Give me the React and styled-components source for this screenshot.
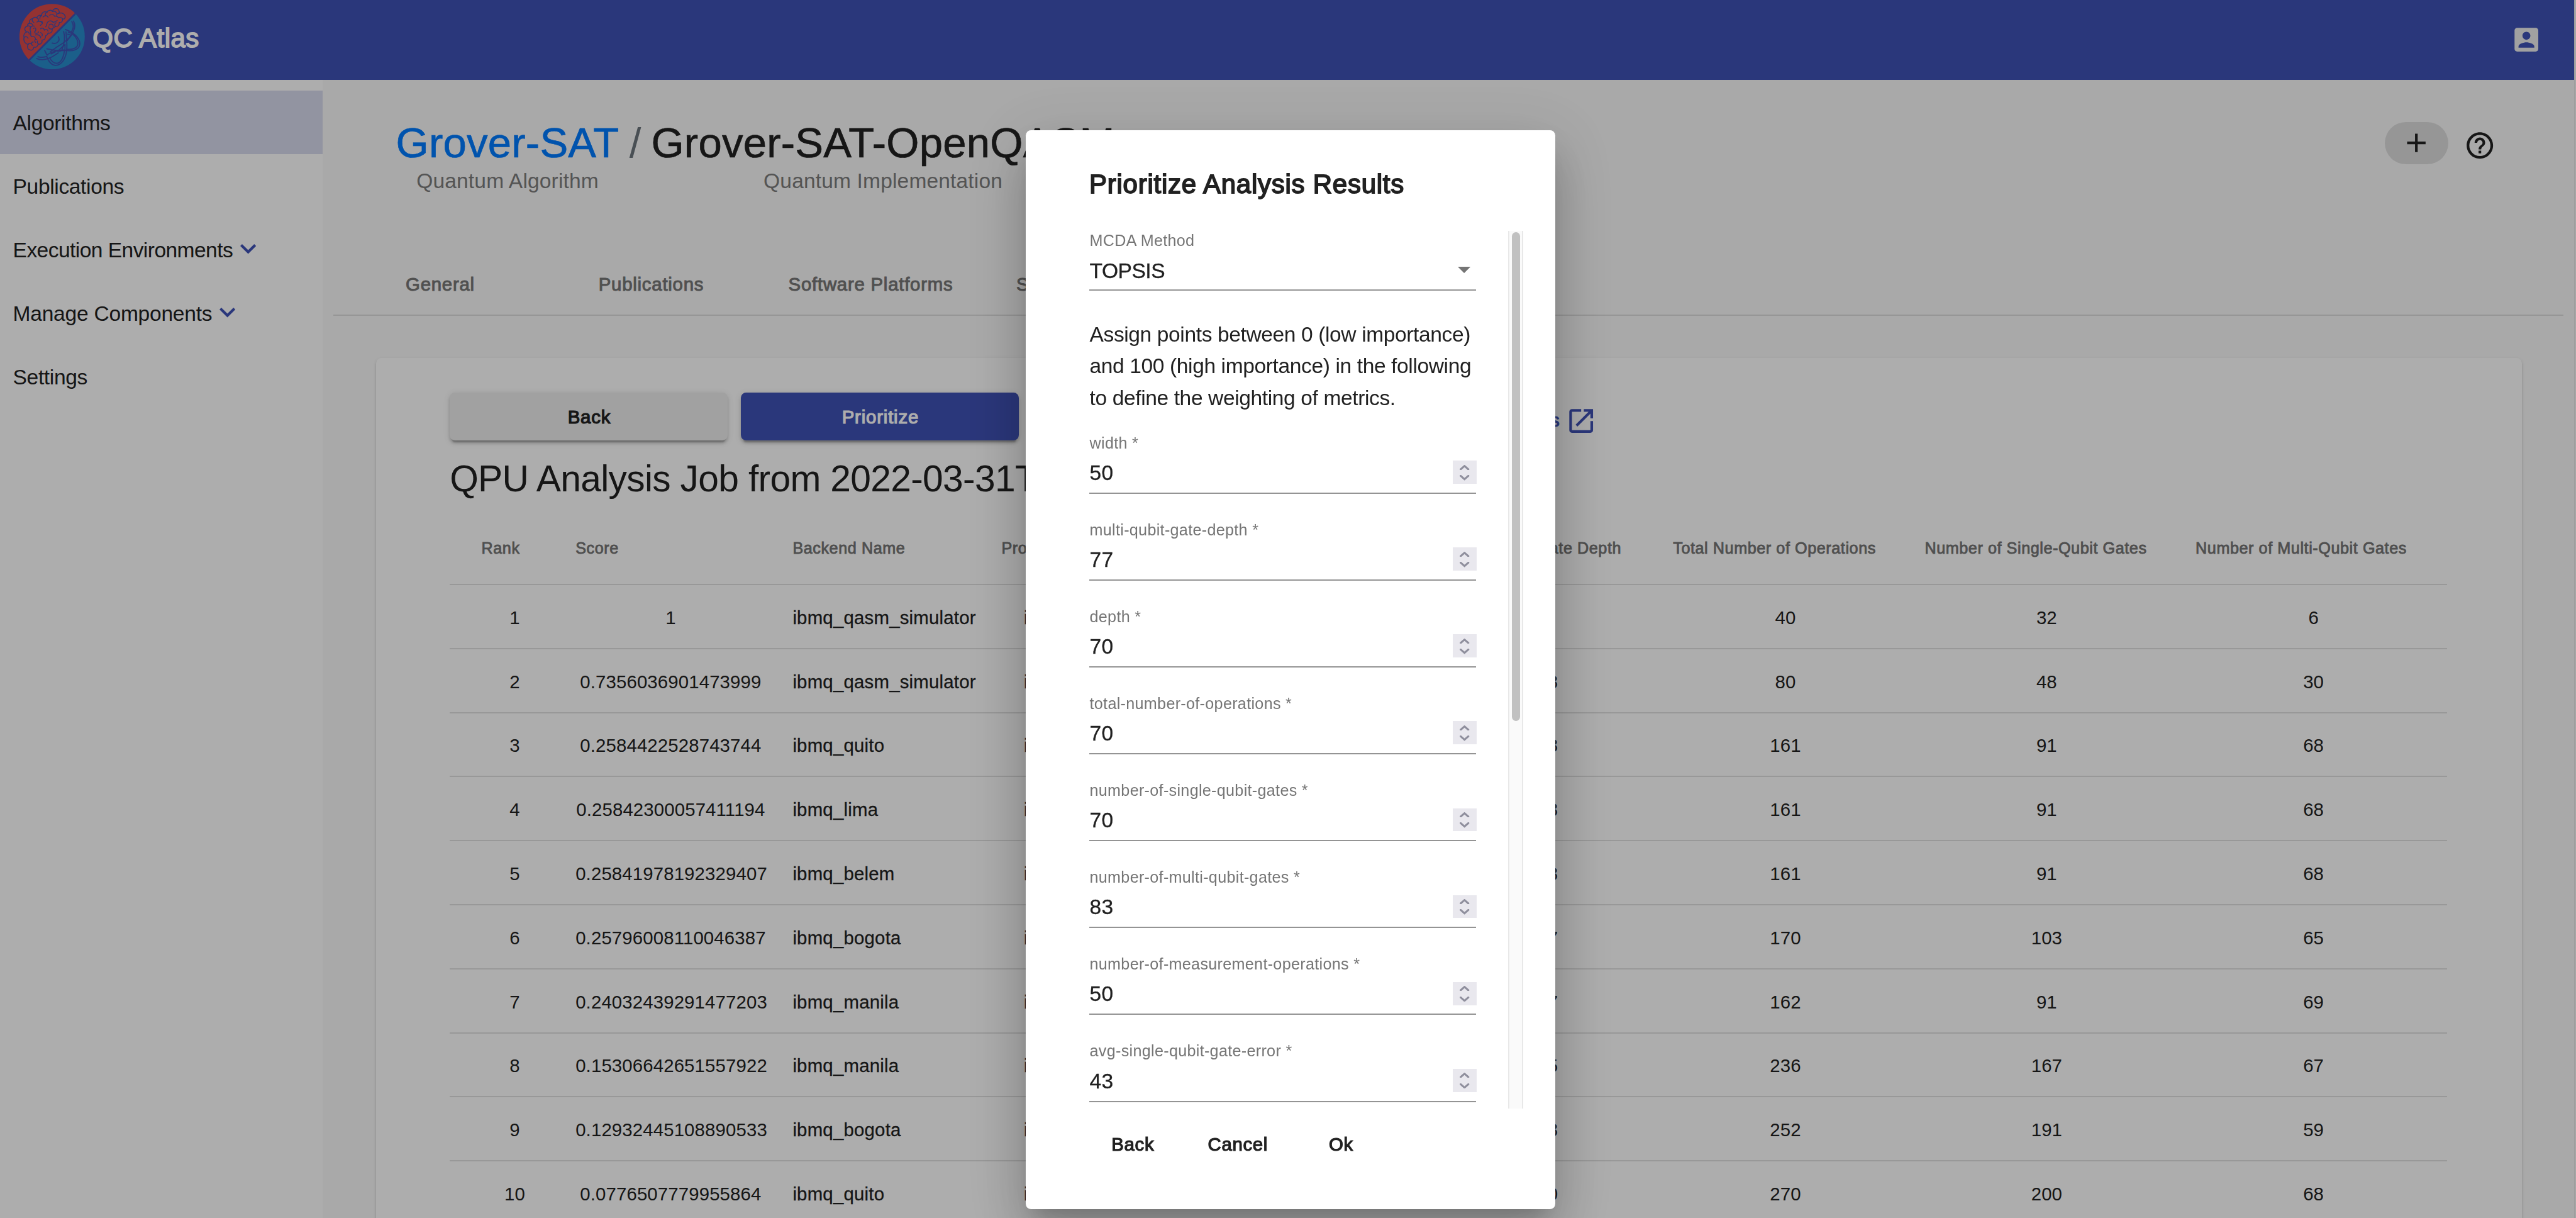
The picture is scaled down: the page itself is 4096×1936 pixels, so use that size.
import React from "react";
import styled, { createGlobalStyle, css } from "styled-components";

const GlobalStyle = createGlobalStyle`
  html { font-size: 80.6617px; }
  body {
    margin: 0;
    overflow: hidden;
    font-family: "Liberation Sans", Arial, Helvetica, sans-serif;
    color: #212121;
    background: #fafafa;
  }
  *, *::before, *::after { box-sizing: border-box; }
`;

const light = css`
  font-weight: 400;
  letter-spacing: -0.0115em;
`;

const medium = css`
  font-weight: 400;
  letter-spacing: 0.023em;
  -webkit-text-stroke: 0.042em currentColor;
`;

const Page = styled.div`
  display: flex;
  width: 100vw;
  height: 100vh;
  overflow: hidden;
`;

const Shell = styled.div`
  flex: 1;
  min-width: 0;
  display: flex;
  flex-direction: column;
`;

const PageScrollbar = styled.div`
  width: 0.04rem;
  background: #f9f9f9;
  border-left: 2px solid #e9e9e9;
`;

/* ---------- top bar ---------- */

const TopBar = styled.header`
  flex: none;
  height: 1.57rem;
  padding: 0 0.628rem 0 0.39rem;
  display: flex;
  align-items: center;
  background: #3f51b5;
  color: #fff;
`;

const LogoSvg = styled.svg`
  width: 1.287rem;
  height: 1.294rem;
  margin-bottom: 0.116rem;
`;

const Brand = styled.span`
  ${medium}
  margin: 0 auto 0.055rem 0.149rem;
  font-size: 0.52rem;
  line-height: 1;
  letter-spacing: 0.012em;
`;

const Icon = styled.svg`
  display: block;
  flex: none;
  width: 0.624rem;
  height: 0.624rem;
  fill: ${(p) => p.$color || "currentColor"};
`;

const Body = styled.div`
  flex: 1;
  min-height: 0;
  display: flex;
`;

/* ---------- side navigation ---------- */

const SideNav = styled.nav`
  flex: none;
  width: 6.36rem;
  padding-top: 0.21rem;
  background: #fff;
`;

const NavItem = styled.a`
  ${light}
  display: flex;
  align-items: center;
  height: 1.252rem;
  padding: 0.035rem 0 0 0.255rem;
  font-size: 0.416rem;
  line-height: 1;
  letter-spacing: ${(p) => p.$tracking || "-0.0105em"};
  background: ${(p) => (p.$active ? "#d8daee" : "transparent")};
`;

const Chevron = styled.svg`
  width: 0.312rem;
  height: 0.193rem;
  margin: 0 0 0.03rem 0.15rem;
  fill: #3f51b5;
`;

/* ---------- main area ---------- */

const Main = styled.main`
  flex: 1;
  min-width: 0;
  display: flex;
  flex-direction: column;
  background: #fafafa;
  overflow: hidden;
`;

const Head = styled.div`
  flex: none;
  display: flex;
  align-items: flex-start;
  height: 3.41rem;
  padding: 0.82rem 1.538rem 0 1.445rem;
`;

const Crumb = styled.div`
  display: flex;
  flex-direction: column;
  align-items: center;
`;

const CrumbTitle = styled.span`
  font-size: 0.832rem;
  line-height: 1;
  letter-spacing: 0.003em;
  -webkit-text-stroke: 0.01em currentColor;
  white-space: nowrap;
  color: ${(p) => (p.$link ? "#007bff" : "#212121")};
`;

const CrumbKind = styled.span`
  margin-top: 0.133rem;
  font-size: 0.416rem;
  line-height: 1;
  letter-spacing: 0.0045em;
  color: #7d7d7d;
`;

const Slash = styled.span`
  margin: 0 0.2rem;
  font-size: 0.832rem;
  line-height: 1;
  color: #6c757d;
`;

const HeadActions = styled.div`
  margin-left: auto;
  display: flex;
  align-items: center;
  gap: 0.318rem;
`;

const AddPill = styled.button`
  display: flex;
  align-items: center;
  justify-content: center;
  width: 1.25rem;
  height: 0.83rem;
  margin-top: 0.01rem;
  padding: 0;
  border: 0;
  border-radius: 0.416rem;
  background: #dedede;
  color: #212121;
`;

const HelpButton = styled.span`
  margin-top: 0.115rem;
`;

const Tabs = styled.div`
  flex: none;
  display: flex;
  height: 1.25rem;
  margin: 0 0.21rem;
  padding-left: 0.028rem;
  border-bottom: 2px solid #dedede;
`;

const Tab = styled.div`
  ${medium}
  display: flex;
  align-items: center;
  justify-content: center;
  min-width: 4.16rem;
  padding: 0.015rem 0.624rem 0;
  font-size: 0.364rem;
  line-height: 1;
  letter-spacing: 0.026em;
  -webkit-text-stroke-width: 0.034em;
  white-space: nowrap;
  color: #777;
`;

const Card = styled.section`
  flex: 1;
  display: flex;
  flex-direction: column;
  margin: 0.83rem 1.03rem 0 1.05rem;
  padding: 0.68rem 1.474rem 0 1.456rem;
  border-radius: 0.104rem 0.104rem 0 0;
  background: #fff;
  box-shadow: 0 0.052rem 0.026rem -0.026rem rgba(0, 0, 0, 0.2),
    0 0.026rem 0.026rem rgba(0, 0, 0, 0.14), 0 0.026rem 0.078rem rgba(0, 0, 0, 0.12);
`;

const Toolbar = styled.div`
  flex: none;
  display: flex;
  gap: 0.26rem;
  height: 0.936rem;
`;

const RaisedButton = styled.button`
  ${medium}
  width: 5.48rem;
  padding: 0.01rem 0 0 0.02rem;
  border: 0;
  border-radius: 0.104rem;
  font-family: inherit;
  font-size: 0.364rem;
  line-height: 1;
  letter-spacing: 0.028em;
  background: ${(p) => (p.$primary ? "#3f51b5" : "#eee")};
  color: ${(p) => (p.$primary ? "#fff" : "#212121")};
  box-shadow: 0 0.078rem 0.026rem -0.052rem rgba(0, 0, 0, 0.2),
    0 0.052rem 0.052rem rgba(0, 0, 0, 0.14), 0 0.026rem 0.13rem rgba(0, 0, 0, 0.12);
`;

const ResultsLink = styled.a`
  ${medium}
  display: flex;
  align-items: center;
  justify-content: flex-end;
  gap: 0.1rem;
  width: 11.13rem;
  padding-top: 0.17rem;
  font-size: 0.364rem;
  line-height: 1;
  color: #3f51b5;
`;

const LinkText = styled.span`
  margin-bottom: 0.04rem;
`;

const JobTitle = styled.h2`
  ${light}
  flex: none;
  height: 0.9rem;
  margin: 0.315rem 0 0.179rem;
  font-size: 0.728rem;
  line-height: 0.9rem;
  white-space: nowrap;
`;

const Row = styled.div`
  flex: none;
  display: grid;
  grid-template-columns: 2.48rem 4.28rem 4.116rem 2.654rem 6.174rem 4.411rem 4.961rem 5.34rem 1fr;
  align-items: center;
  height: ${(p) => (p.$head ? "1.461rem" : "1.262rem")};
  border-bottom: 2px solid #e0e0e0;
`;

const HeadCell = styled.div`
  ${medium}
  padding: 0.025rem 0 0 ${(p) => p.$left || "0"};
  font-size: 0.312rem;
  line-height: 1;
  -webkit-text-stroke-width: 0.034em;
  white-space: nowrap;
  color: #757575;
`;

const Cell = styled.div`
  ${(p) => (p.$name ? "letter-spacing: 0.0076em; -webkit-text-stroke: 0.01em currentColor;" : "letter-spacing: 0.0047em;")}
  padding: ${(p) => p.$pad || "0 0.53rem 0 0"};
  margin-top: 0.042rem;
  font-size: 0.364rem;
  line-height: 1;
  text-align: ${(p) => (p.$name ? "left" : "center")};
  white-space: nowrap;
`;

/* ---------- dialog ---------- */

const Backdrop = styled.div`
  position: fixed;
  inset: 0;
  display: flex;
  justify-content: center;
  align-items: flex-start;
  padding: 2.57rem 0 0 0.1rem;
  background: rgba(0, 0, 0, 0.32);
`;

const Dialog = styled.div`
  display: flex;
  flex-direction: column;
  width: 10.44rem;
  height: 21.26rem;
  padding: 0.805rem 0.63rem 0 1.247rem;
  border-radius: 0.104rem;
  background: #fff;
  box-shadow: 0 0.286rem 0.39rem -0.182rem rgba(0, 0, 0, 0.2),
    0 0.624rem 0.988rem 0.078rem rgba(0, 0, 0, 0.14),
    0 0.234rem 1.196rem 0.208rem rgba(0, 0, 0, 0.12);
`;

const DialogTitle = styled.h1`
  ${medium}
  margin: 0 0 0.655rem 0.005rem;
  font-size: 0.52rem;
  line-height: 1;
  letter-spacing: 0.0185em;
`;

const DialogScroll = styled.div`
  display: flex;
  justify-content: space-between;
  height: 17.29rem;
  overflow: hidden;
`;

const Form = styled.div`
  width: 7.631rem;
  padding-top: 0.042rem;
`;

const Field = styled.div`
  margin-bottom: 0.548rem;
`;

const FieldLabel = styled.div`
  padding-left: 0.012rem;
  font-size: 0.312rem;
  line-height: 1;
  letter-spacing: 0.012em;
  color: #757575;
`;

const FieldValue = styled.div`
  display: flex;
  align-items: center;
  justify-content: space-between;
  height: 0.416rem;
  margin: 0.227rem 0 ${(p) => (p.$select ? "0.156rem" : "0.179rem")};
  padding-left: 0.012rem;
  font-size: 0.416rem;
  line-height: 1;
  letter-spacing: ${(p) => (p.$select ? "-0.014em" : "0.01em")};
  -webkit-text-stroke: 0.01em currentColor;
`;

const Underline = styled.div`
  height: 0.03rem;
  border-top: 2px solid #949494;
`;

const SelectArrow = styled.svg`
  width: 0.25rem;
  height: 0.125rem;
  margin: 0 0.105rem 0.04rem 0;
  fill: #757575;
`;

const Stepper = styled.span`
  flex: none;
  display: flex;
  flex-direction: column;
  align-items: center;
  justify-content: space-between;
  width: 0.474rem;
  height: 0.458rem;
  margin: 0 -0.012rem 0.03rem 0;
  padding: 0.078rem 0 0.07rem;
  background: #e9e8ee;
`;

const StepIcon = styled.svg`
  width: 0.19rem;
  height: 0.104rem;
  fill: none;
  stroke: #8f8f9d;
  stroke-width: 2;
  stroke-linecap: round;
`;

const Hint = styled.p`
  ${light}
  margin: 0.002rem 0 0.412rem 0.012rem;
  font-size: 0.416rem;
  line-height: 0.628rem;
  white-space: nowrap;
`;

const ScrollTrack = styled.div`
  width: 0.3rem;
  padding: 0.02rem 0.03rem 0 0.05rem;
  border: solid #e8e8e8;
  border-width: 0 2px;
  background: #fafafa;
`;

const ScrollThumb = styled.div`
  width: 0.16rem;
  height: 9.64rem;
  border-radius: 0.08rem;
  background: #c1c1c1;
`;

const DialogActions = styled.div`
  display: flex;
  gap: 0.215rem;
  margin-top: 0.236rem;
`;

const FlatButton = styled.button`
  ${medium}
  width: ${(p) => p.$width};
  height: 0.936rem;
  padding: 0;
  border: 0;
  background: none;
  color: #212121;
  font-family: inherit;
  font-size: 0.364rem;
  line-height: 1;
`;

/* ---------- data ---------- */

const results = [
  [1, "1", "ibmq_qasm_simulator", 6, 40, 32, 6],
  [2, "0.7356036901473999", "ibmq_qasm_simulator", 28, 80, 48, 30],
  [3, "0.2584422528743744", "ibmq_quito", 68, 161, 91, 68],
  [4, "0.25842300057411194", "ibmq_lima", 68, 161, 91, 68],
  [5, "0.25841978192329407", "ibmq_belem", 68, 161, 91, 68],
  [6, "0.25796008110046387", "ibmq_bogota", 67, 170, 103, 65],
  [7, "0.24032439291477203", "ibmq_manila", 67, 162, 91, 69],
  [8, "0.15306642651557922", "ibmq_manila", 65, 236, 167, 67],
  [9, "0.12932445108890533", "ibmq_bogota", 58, 252, 191, 59],
  [10, "0.0776507779955864", "ibmq_quito", 60, 270, 200, 68],
];

const metrics = [
  ["width", 50],
  ["multi-qubit-gate-depth", 77],
  ["depth", 70],
  ["total-number-of-operations", 70],
  ["number-of-single-qubit-gates", 70],
  ["number-of-multi-qubit-gates", 83],
  ["number-of-measurement-operations", 50],
  ["avg-single-qubit-gate-error", 43],
];

/* ---------- parts ---------- */

function Logo() {
  return (
    <LogoSvg viewBox="57 24 386 388">
      <clipPath id="disc">
        <circle cx="250" cy="218" r="193.5" />
      </clipPath>
      <g clipPath="url(#disc)">
        <path d="M57 24H443V27L57 414Z" fill="#db4a4a" />
        <path d="M443 27V412H57V414Z" fill="#288ccc" />
        <path d="M456 14L46 425" stroke="#3f51b5" strokeWidth="10" />
      </g>
      <g fill="none" stroke="#3f51b5" strokeWidth="5" strokeLinecap="round" strokeLinejoin="round">
        <path d="M108 264C92 262 78 244 84 224C78 208 88 194 100 190C84 182 84 160 104 156C104 146 108 140 116 140C112 124 122 112 134 112C142 104 152 102 160 108C160 96 176 88 188 94C186 76 204 66 220 74C224 60 248 58 252 70C256 50 284 46 290 64C294 70 292 76 290 80C306 76 320 82 326 94C332 108 318 120 312 112C314 128 304 138 292 134C294 150 284 160 270 158C262 162 256 168 250 172C254 190 240 202 226 196C224 206 218 210 212 212C212 232 202 240 190 238C194 252 184 266 168 262C164 278 154 284 142 280C140 296 128 302 118 296C104 294 100 276 108 264" />
        <path d="M252 70C262 64 274 70 276 80M290 80C282 82 276 86 274 92M236 92C246 82 262 88 264 98M264 98C276 94 284 100 290 108M312 112C306 106 298 102 292 104M220 74C212 78 208 84 210 92M196 102C206 92 222 92 226 104M188 94C180 98 176 106 178 114M160 108C168 112 172 118 170 126M160 132C172 124 184 126 190 136M134 112C130 122 134 130 142 134M116 140C126 138 134 144 136 152M104 156C112 152 122 156 124 166M120 182C116 164 128 152 144 156M100 190C110 188 116 196 114 204M84 224C92 214 104 218 108 228M120 182C130 196 116 208 128 218M140 170C156 158 158 182 146 190M146 190C150 204 166 200 170 190M128 218C142 214 152 222 152 234M152 208C168 204 182 212 182 226M152 252C142 242 148 232 160 236M108 264C114 254 126 256 130 264M136 270C124 268 126 248 138 250M182 172C190 164 202 168 204 180M204 180C212 172 224 176 226 186M212 160C222 150 214 138 226 130M226 130C236 120 252 126 256 134M232 150C246 138 258 146 256 160M250 172C240 176 228 170 230 160M270 158C262 150 264 140 274 136M256 134C266 128 276 132 280 122M182 194C190 198 196 206 190 214M168 262C162 256 160 250 164 244M180 152C192 146 196 136 190 128" />
      </g>
      <g fill="none" stroke="#3f51b5" strokeWidth="6.5" strokeLinecap="round" strokeLinejoin="round">
        <path d="M376 126C392 152 382 180 364 206C344 240 306 262 274 282C262 292 250 300 238 308" />
        <path d="M366 128C380 150 376 172 364 190" />
        <path d="M328 176C372 190 412 222 414 260C412 296 372 306 326 300C288 302 252 298 218 290" />
        <path d="M346 192C384 204 404 236 402 262C398 288 366 296 336 292" />
        <path d="M318 188C328 222 322 262 308 296C300 312 282 300 268 304C248 310 226 318 220 328L206 300" />
        <path d="M332 190C336 240 344 300 326 340C312 376 284 396 254 384C234 374 224 352 218 336" />
        <path d="M322 306C316 346 300 376 276 376C254 374 240 352 236 344" />
        <path d="M158 347C184 360 214 354 236 344C254 336 268 326 286 314" />
        <path d="M166 337C184 344 202 340 218 336" />
        <path d="M342 204L364 210L340 240M244 320L268 308M288 300L326 264V296Z" />
        <path d="M286 218C300 240 280 266 250 256" />
      </g>
    </LogoSvg>
  );
}

function ExpandMore() {
  return (
    <Chevron viewBox="6 8.59 12 7.41">
      <path d="M7.41 8.59 12 13.17l4.59-4.58L18 10l-6 6-6-6z" />
    </Chevron>
  );
}

function NumberStepper() {
  return (
    <Stepper>
      <StepIcon viewBox="0 0 10 5.5">
        <path d="M1 4.6 5 1.1 9 4.6" />
      </StepIcon>
      <StepIcon viewBox="0 0 10 5.5">
        <path d="M1 0.9 5 4.4 9 0.9" />
      </StepIcon>
    </Stepper>
  );
}

function ResultRow({ row }) {
  const [rank, score, backend, gateDepth, total, single, multi] = row;
  return (
    <Row>
      <Cell $pad="0 0.53rem 0 0.615rem">{rank}</Cell>
      <Cell>{score}</Cell>
      <Cell $name $pad="0">{backend}</Cell>
      <Cell $name $pad="0 0 0 0.442rem">ibmq</Cell>
      <span />
      <Cell $pad="0 0.535rem 0 0">{gateDepth}</Cell>
      <Cell>{total}</Cell>
      <Cell>{single}</Cell>
      <Cell $pad="0 0.306rem 0 0">{multi}</Cell>
    </Row>
  );
}

export default function App() {
  return (
    <>
      <GlobalStyle />
      <Page>
        <Shell>
          <TopBar>
            <Logo />
            <Brand>QC Atlas</Brand>
            <Icon viewBox="0 0 24 24" $color="#eee">
              <path d="M3 5v14c0 1.1.89 2 2 2h14c1.1 0 2-.9 2-2V5c0-1.1-.9-2-2-2H5c-1.11 0-2 .9-2 2zm12 4c0 1.66-1.34 3-3 3s-3-1.34-3-3 1.34-3 3-3 3 1.34 3 3zm-9 8c0-2 4-3.1 6-3.1s6 1.1 6 3.1v1H6v-1z" />
            </Icon>
          </TopBar>
          <Body>
            <SideNav>
              <NavItem $active>Algorithms</NavItem>
              <NavItem>Publications</NavItem>
              <NavItem $tracking="-0.0164em">
                Execution Environments
                <ExpandMore />
              </NavItem>
              <NavItem $tracking="-0.007em">
                Manage Components
                <ExpandMore />
              </NavItem>
              <NavItem>Settings</NavItem>
            </SideNav>
            <Main>
              <Head>
                <Crumb>
                  <CrumbTitle $link>Grover-SAT</CrumbTitle>
                  <CrumbKind>Quantum Algorithm</CrumbKind>
                </Crumb>
                <Slash>/</Slash>
                <Crumb>
                  <CrumbTitle>Grover-SAT-OpenQASM</CrumbTitle>
                  <CrumbKind>Quantum Implementation</CrumbKind>
                </Crumb>
                <HeadActions>
                  <AddPill>
                    <Icon viewBox="0 0 24 24">
                      <path d="M19 13h-6v6h-2v-6H5v-2h6V5h2v6h6v2z" />
                    </Icon>
                  </AddPill>
                  <HelpButton>
                    <Icon viewBox="0 0 24 24">
                      <path d="M11 18h2v-2h-2v2zm1-16C6.48 2 2 6.48 2 12s4.48 10 10 10 10-4.48 10-10S17.52 2 12 2zm0 18c-4.41 0-8-3.59-8-8s3.59-8 8-8 8 3.59 8 8-3.59 8-8 8zm0-14c-2.21 0-4 1.79-4 4h2c0-1.1.9-2 2-2s2 .9 2 2c0 2-3 1.75-3 5h2c0-2.25 3-2.5 3-5 0-2.21-1.79-4-4-4z" />
                    </Icon>
                  </HelpButton>
                </HeadActions>
              </Head>
              <Tabs>
                <Tab>General</Tab>
                <Tab>Publications</Tab>
                <Tab>Software Platforms</Tab>
                <Tab>Selection Criteria</Tab>
              </Tabs>
              <Card>
                <Toolbar>
                  <RaisedButton>Back</RaisedButton>
                  <RaisedButton $primary>Prioritize</RaisedButton>
                  <ResultsLink>
                    <LinkText>Analysis Results</LinkText>
                    <Icon viewBox="0 0 24 24">
                      <path d="M19 19H5V5h7V3H5c-1.11 0-2 .9-2 2v14c0 1.1.89 2 2 2h14c1.1 0 2-.9 2-2v-7h-2v7zM14 3v2h3.59l-9.83 9.83 1.41 1.41L19 6.41V10h2V3h-7z" />
                    </Icon>
                  </ResultsLink>
                </Toolbar>
                <JobTitle>QPU Analysis Job from 2022-03-31T</JobTitle>
                <Row $head>
                  <HeadCell $left="0.625rem">Rank</HeadCell>
                  <HeadCell>Score</HeadCell>
                  <HeadCell>Backend Name</HeadCell>
                  <HeadCell>Provider</HeadCell>
                  <span />
                  <HeadCell $left="0.045rem">Multi-Qubit Gate Depth</HeadCell>
                  <HeadCell>Total Number of Operations</HeadCell>
                  <HeadCell>Number of Single-Qubit Gates</HeadCell>
                  <HeadCell>Number of Multi-Qubit Gates</HeadCell>
                </Row>
                {results.map((row) => (
                  <ResultRow key={row[0]} row={row} />
                ))}
              </Card>
            </Main>
          </Body>
        </Shell>
        <PageScrollbar />
      </Page>
      <Backdrop>
        <Dialog>
          <DialogTitle>Prioritize Analysis Results</DialogTitle>
          <DialogScroll>
            <Form>
              <Field>
                <FieldLabel>MCDA Method</FieldLabel>
                <FieldValue $select>
                  TOPSIS
                  <SelectArrow viewBox="0 0 10 5">
                    <path d="M0 0h10L5 5z" />
                  </SelectArrow>
                </FieldValue>
                <Underline />
              </Field>
              <Hint>
                Assign points between 0 (low importance)
                <br />
                and 100 (high importance) in the following
                <br />
                to define the weighting of metrics.
              </Hint>
              {metrics.map(([name, value]) => (
                <Field key={name}>
                  <FieldLabel>{name} *</FieldLabel>
                  <FieldValue>
                    {value}
                    <NumberStepper />
                  </FieldValue>
                  <Underline />
                </Field>
              ))}
            </Form>
            <ScrollTrack>
              <ScrollThumb />
            </ScrollTrack>
          </DialogScroll>
          <DialogActions>
            <FlatButton $width="1.73rem">Back</FlatButton>
            <FlatButton $width="1.98rem">Cancel</FlatButton>
            <FlatButton $width="1.66rem">Ok</FlatButton>
          </DialogActions>
        </Dialog>
      </Backdrop>
    </>
  );
}
